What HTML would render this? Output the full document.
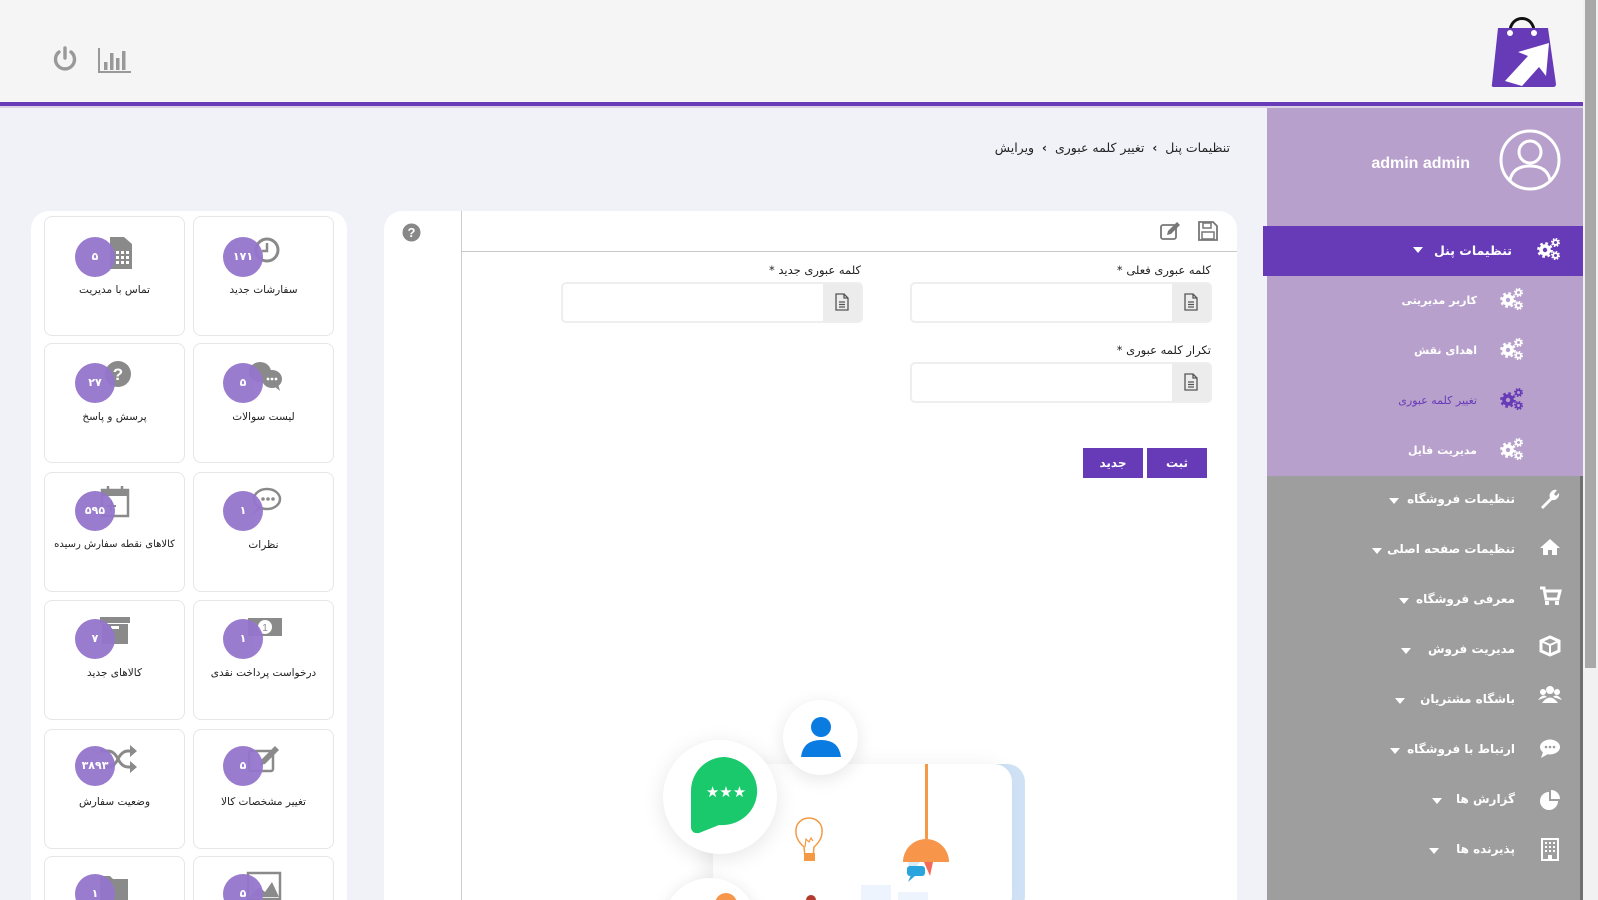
<!DOCTYPE html>
<html style="overflow:hidden;width:1598px;height:900px"><head><meta charset="utf-8">
<style>
*{box-sizing:border-box;margin:0;padding:0}
html,body{overflow:hidden}
body{width:1598px;height:900px;background:#f0f2f7;font-family:"DejaVu Sans","Liberation Sans",sans-serif;position:relative}
#wrap{position:absolute;left:0;top:0;width:1598px;height:900px;overflow:hidden}
.abs{position:absolute}
.fa{font-family:"DejaVu Sans",sans-serif;direction:rtl;white-space:nowrap}
#hdr{left:0;top:0;width:1583px;height:102px;background:#f5f5f5}
#hline{left:0;top:102px;width:1583px;height:4px;background:#673ab7}
#hline2{left:0;top:106px;width:1583px;height:2px;background:#d9d2e6}
#sb{left:1583px;top:0;width:15px;height:900px;background:#f1f1f1}
#thumb{left:1585px;top:0;width:11px;height:668px;background:#a8a8a8}
#side{left:1267px;top:108px;width:316px;height:368px;background:#b8a0cc}
#side2{left:1267px;top:476px;width:316px;height:424px;background:#9e9e9e}
#sideline{left:1580px;top:476px;width:3px;height:424px;background:#6f6f6f}
#act{left:1263px;top:226px;width:320px;height:50px;background:#673ab7}
.t{color:#fff;font-size:12px;font-weight:bold}
.car{width:0;height:0;border-left:5px solid transparent;border-right:5px solid transparent;border-top:6px solid #fff}
.card{background:#fff;border:1px solid #e6e6ea;border-radius:8px;width:141px;height:120px}
.circ{width:40px;height:40px;border-radius:50%;background:#9575cd;color:#fff;font-size:11px;font-weight:bold;text-align:center;line-height:40px;opacity:.95}
.lbl{font-size:10.5px;color:#222;text-align:center;width:141px}
.inp{height:41px;border:2px solid #eeeeee;border-radius:5px;background:#fff}
.ib{right:0;top:0;width:38px;height:37px;background:#ececec}
.btn{background:#673ab7;color:#fff;font-size:12px;font-weight:bold;text-align:center;line-height:30px;height:30px}
</style></head><body><div id="wrap">
<div id="hdr" class="abs"></div>
<div id="hline" class="abs"></div>
<div id="hline2" class="abs"></div>
<svg class="abs" style="left:51px;top:45px" width="28" height="28" viewBox="0 0 28 28"><path d="M8 7 A9.5 9.5 0 1 0 20 7" fill="none" stroke="#999" stroke-width="3.4" stroke-linecap="round"/><line x1="14" y1="3" x2="14" y2="13" stroke="#999" stroke-width="3.4" stroke-linecap="round"/></svg>
<svg class="abs" style="left:98px;top:48px" width="34" height="26" viewBox="0 0 34 26"><path d="M1 0 V24 H33" fill="none" stroke="#999" stroke-width="2"/><rect x="6" y="14" width="3.5" height="8" fill="#999"/><rect x="12" y="5" width="3.5" height="17" fill="#999"/><rect x="18" y="10" width="3.5" height="12" fill="#999"/><rect x="24" y="3" width="3.5" height="19" fill="#999"/></svg>
<svg class="abs" style="left:1488px;top:10px" width="72" height="80" viewBox="0 0 72 80"><path d="M22 22 C22 4 46 4 46 22" fill="none" stroke="#111" stroke-width="3"/><path d="M10 18 H60 L68 74 Q68 77 65 77 H6 Q3 77 4 74 Z" fill="#673ab7"/><circle cx="22" cy="23" r="3" fill="#fff"/><circle cx="46" cy="23" r="3" fill="#fff"/><path d="M17 71 L40 46 L30 42 L61 33 L58 66 L51 57 L34 76 Z" fill="#fff"/></svg>
<div id="sb" class="abs"></div><div id="thumb" class="abs"></div>

<div id="side" class="abs"></div>
<div id="side2" class="abs"></div>
<div id="sideline" class="abs"></div>
<svg class="abs" style="left:1499px;top:129px" width="62" height="62" viewBox="0 0 62 62"><circle cx="31" cy="31" r="29" fill="none" stroke="#fff" stroke-width="3"/><circle cx="31" cy="23" r="11" fill="none" stroke="#fff" stroke-width="3"/><path d="M11 51 Q14 37 31 37 Q48 37 51 51" fill="none" stroke="#fff" stroke-width="3"/></svg>
<div class="abs t" style="right:128px;top:155px;font-size:16px;font-family:'Liberation Sans',sans-serif">admin admin</div>
<div id="act" class="abs"></div>
<svg width="0" height="0" style="position:absolute"><defs><g id="gear"><circle cx="8" cy="13" r="4" fill="none" stroke="currentColor" stroke-width="3.6"/><circle cx="8" cy="13" r="6.6" fill="none" stroke="currentColor" stroke-width="2.6" stroke-dasharray="2.6 2.6"/><circle cx="18.5" cy="5.5" r="2.4" fill="none" stroke="currentColor" stroke-width="1.8"/><circle cx="18.5" cy="5.5" r="3.8" fill="none" stroke="currentColor" stroke-width="1.5" stroke-dasharray="1.6 1.4"/><circle cx="18.5" cy="18.5" r="2.4" fill="none" stroke="currentColor" stroke-width="1.8"/><circle cx="18.5" cy="18.5" r="3.8" fill="none" stroke="currentColor" stroke-width="1.5" stroke-dasharray="1.6 1.4"/></g></defs></svg>
<svg class="abs" style="left:1537px;top:237px;color:#fff" width="24" height="24"><use href="#gear"/></svg>
<div class="abs fa t" style="right:86px;top:243px;font-size:12.5px">تنظیمات پنل</div>
<div class="abs car" style="left:1413px;top:247px"></div>
<svg class="abs" style="left:1500px;top:287px;color:#fff" width="24" height="24"><use href="#gear"/></svg>
<div class="abs fa t" style="right:121px;top:294px;font-size:11px">کاربر مدیریتی</div>
<svg class="abs" style="left:1500px;top:337px;color:#fff" width="24" height="24"><use href="#gear"/></svg>
<div class="abs fa t" style="right:121px;top:344px;font-size:11px">اهدای نقش</div>
<svg class="abs" style="left:1500px;top:387px;color:#673ab7" width="24" height="24"><use href="#gear"/></svg>
<div class="abs fa t" style="right:121px;top:394px;font-size:11px;color:#673ab7;font-weight:normal">تغییر کلمه عبوری</div>
<svg class="abs" style="left:1500px;top:437px;color:#fff" width="24" height="24"><use href="#gear"/></svg>
<div class="abs fa t" style="right:121px;top:444px;font-size:11px">مدیریت فایل</div>

<div class="abs fa t" style="right:83px;top:492px">تنظیمات فروشگاه</div><div class="abs car" style="left:1389px;top:498px"></div>
<div class="abs fa t" style="right:83px;top:542px">تنظیمات صفحه اصلی</div><div class="abs car" style="left:1372px;top:548px"></div>
<div class="abs fa t" style="right:83px;top:592px">معرفی فروشگاه</div><div class="abs car" style="left:1399px;top:598px"></div>
<div class="abs fa t" style="right:83px;top:642px">مدیریت فروش</div><div class="abs car" style="left:1401px;top:648px"></div>
<div class="abs fa t" style="right:83px;top:692px">باشگاه مشتریان</div><div class="abs car" style="left:1395px;top:698px"></div>
<div class="abs fa t" style="right:83px;top:742px">ارتباط با فروشگاه</div><div class="abs car" style="left:1390px;top:748px"></div>
<div class="abs fa t" style="right:83px;top:792px">گزارش ها</div><div class="abs car" style="left:1432px;top:798px"></div>
<div class="abs fa t" style="right:83px;top:842px">پذیرنده ها</div><div class="abs car" style="left:1429px;top:848px"></div>
<svg class="abs" style="left:1538px;top:487px" width="24" height="380" viewBox="0 0 24 380" fill="#fff">
<path d="M3 20 L12 11 A6 6 0 0 1 19 3 L16 7 L18 9 L21 6 A6 6 0 0 1 14 13 L5 22 Z"/>
<path d="M2 61 L12 52 L22 61 H19 V68 H14 V63 H10 V68 H5 V61 Z"/>
<path d="M2 101 H6 L8 112 H20 L22 104 H7" fill="none" stroke="#fff" stroke-width="3"/><rect x="7" y="114" width="4" height="4"/><rect x="17" y="114" width="4" height="4"/>
<path d="M12 150 L21 154 V164 L12 168 L3 164 V154 Z" fill="none" stroke="#fff" stroke-width="3"/><path d="M3 154 L12 158 L21 154 M12 158 V168" fill="none" stroke="#fff" stroke-width="2"/>
<circle cx="12" cy="203" r="4"/><circle cx="5" cy="205" r="3"/><circle cx="19" cy="205" r="3"/><path d="M4 216 Q12 205 20 216 Z"/><path d="M0 213 Q5 206 9 210 Z M24 213 Q19 206 15 210 Z"/>
<ellipse cx="12" cy="260" rx="10" ry="7.5"/><path d="M5 265 L3 271 L10 267 Z"/><circle cx="8" cy="260" r="1.3" fill="#9e9e9e"/><circle cx="12" cy="260" r="1.3" fill="#9e9e9e"/><circle cx="16" cy="260" r="1.3" fill="#9e9e9e"/>
<path d="M11 305 A9 9 0 1 0 20 314 H11 Z"/><path d="M13 303 A9 9 0 0 1 22 312 H13 Z"/>
<g transform="translate(0,17)"><rect x="4" y="335" width="16" height="21" fill="none" stroke="#fff" stroke-width="2"/><path d="M7 338h2v2h-2zM11 338h2v2h-2zM15 338h2v2h-2zM7 342h2v2h-2zM11 342h2v2h-2zM15 342h2v2h-2zM7 346h2v2h-2zM11 346h2v2h-2zM15 346h2v2h-2zM10 351h4v5h-4z"/></g>
</svg>

<div class="abs fa" style="right:368px;top:140px;font-size:12.5px;color:#222">تنظیمات پنل &nbsp;<b style="font-size:12px">›</b>&nbsp; تغییر کلمه عبوری &nbsp;<b style="font-size:12px">›</b>&nbsp; ویرایش</div>

<div class="abs" style="left:384px;top:211px;width:853px;height:700px;background:#fff;border-radius:18px 18px 0 0"></div>
<div class="abs" style="left:461px;top:211px;width:1px;height:689px;background:#ccc"></div>
<div class="abs" style="left:461px;top:251px;width:776px;height:1px;background:#c8c8c8"></div>
<svg class="abs" style="left:402px;top:223px" width="19" height="19" viewBox="0 0 19 19"><circle cx="9.5" cy="9.5" r="9" fill="#888"/><text x="9.5" y="14" font-size="13" font-weight="bold" fill="#fff" text-anchor="middle" font-family="Liberation Sans">?</text></svg>
<svg class="abs" style="left:1160px;top:221px" width="22" height="20" viewBox="0 0 22 20"><rect x="1" y="4" width="15" height="14" rx="2" fill="none" stroke="#777" stroke-width="1.8"/><path d="M7 14 L8 10 L17 1 L20 4 L11 13 Z" fill="#777"/></svg>
<svg class="abs" style="left:1198px;top:221px" width="20" height="20" viewBox="0 0 20 20"><path d="M1 1 H15 L19 5 V19 H1 Z" fill="none" stroke="#777" stroke-width="1.8"/><rect x="5" y="2" width="8" height="5" fill="none" stroke="#777" stroke-width="1.5"/><rect x="4" y="11" width="12" height="7" fill="none" stroke="#777" stroke-width="1.5"/></svg>

<div class="abs fa" style="right:387px;top:263px;font-size:11.5px;color:#222">کلمه عبوری فعلی *</div>
<div class="abs fa" style="right:737px;top:263px;font-size:11.5px;color:#222">کلمه عبوری جدید *</div>
<div class="abs fa" style="right:387px;top:343px;font-size:11.5px;color:#222">تکرار کلمه عبوری *</div>
<svg width="0" height="0" style="position:absolute"><defs><g id="doc"><path d="M2 1 H10 L14 5 V17 H2 Z M10 1 V5 H14" fill="none" stroke="#555" stroke-width="1.3"/><path d="M5 9 H11 M5 11.5 H11 M5 14 H11" stroke="#555" stroke-width="1.2"/></g></defs></svg>
<div class="abs inp" style="left:910px;top:282px;width:302px"><div class="abs ib"><svg class="abs" style="left:11px;top:9px" width="16" height="18"><use href="#doc"/></svg></div></div>
<div class="abs inp" style="left:561px;top:282px;width:302px"><div class="abs ib"><svg class="abs" style="left:11px;top:9px" width="16" height="18"><use href="#doc"/></svg></div></div>
<div class="abs inp" style="left:910px;top:362px;width:302px"><div class="abs ib"><svg class="abs" style="left:11px;top:9px" width="16" height="18"><use href="#doc"/></svg></div></div>
<div class="abs btn fa" style="left:1147px;top:448px;width:60px">ثبت</div>
<div class="abs btn fa" style="left:1083px;top:448px;width:60px">جدید</div>

<div class="abs" style="left:720px;top:764px;width:305px;height:150px;background:#cfe1f4;border-radius:18px"></div>
<div class="abs" style="left:713px;top:764px;width:299px;height:150px;background:#fff;border-radius:18px;box-shadow:-8px 0 20px rgba(0,0,0,.06)"></div>
<div class="abs" style="left:663px;top:740px;width:114px;height:114px;border-radius:50%;background:#fff;box-shadow:0 4px 22px rgba(0,0,0,.1)"></div>
<svg class="abs" style="left:689px;top:756px" width="72" height="78" viewBox="0 0 72 78"><path d="M36 1 A35 34 0 1 1 30 69 L10 77 Q3 78 2 72 V36 A34 34 0 0 1 36 1 Z" fill="#19c96b"/><text x="37" y="41" font-size="15" fill="#fff" text-anchor="middle" font-family="DejaVu Sans">★★★</text></svg>
<div class="abs" style="left:783px;top:700px;width:75px;height:75px;border-radius:50%;background:#fff;box-shadow:0 4px 18px rgba(0,0,0,.1)"></div>
<svg class="abs" style="left:800px;top:716px" width="42" height="42" viewBox="0 0 42 42"><circle cx="21" cy="11" r="10" fill="#0a7be0"/><path d="M1 41 Q3 24 21 24 Q39 24 41 41 Z" fill="#0a7be0"/></svg>
<div class="abs" style="left:663px;top:878px;width:94px;height:94px;border-radius:50%;background:#fff;box-shadow:0 2px 16px rgba(0,0,0,.1)"></div>
<div class="abs" style="left:715px;top:893px;width:22px;height:22px;border-radius:50%;background:#f7964a"></div>
<svg class="abs" style="left:792px;top:817px" width="36" height="50" viewBox="0 0 36 50"><path d="M12 30 Q3 22 4 13 A13 12 0 0 1 30 13 Q31 22 22 30 L21 40 H13 Z" fill="none" stroke="#f49a45" stroke-width="1.5"/><rect x="12" y="36" width="11" height="8" fill="#f49a45"/><path d="M13 30 L14 22 L17 25 L19 21 L21 24" fill="none" stroke="#f49a45" stroke-width="1.2"/></svg>
<div class="abs" style="left:925px;top:764px;width:3px;height:75px;background:#f49a45"></div>
<svg class="abs" style="left:900px;top:834px" width="52" height="52" viewBox="0 0 52 52"><path d="M3 28 A23 23 0 0 1 49 28 Z" fill="#f7964a"/><path d="M24 28 L33 28 L30 42 Z" fill="#f26b5b"/><path d="M8 28 L20 28 L10 40 Z" fill="#d8ecf8"/><rect x="7" y="32" width="18" height="10" rx="3" fill="#29a4dc"/><path d="M11 41 L8 48 L16 41 Z" fill="#29a4dc"/></svg>
<div class="abs" style="left:861px;top:885px;width:30px;height:20px;background:#eef4fd"></div>
<div class="abs" style="left:898px;top:892px;width:30px;height:20px;background:#eef4fd"></div>
<div class="abs" style="left:806px;top:895px;width:10px;height:10px;border-radius:50%;background:#b23a2c"></div>

<div class="abs" style="left:31px;top:211px;width:316px;height:700px;background:#fff;border-radius:18px 18px 0 0"></div>
<div class="abs card" style="left:193px;top:216px"></div><div class="abs card" style="left:44px;top:216px"></div>
<div class="abs card" style="left:193px;top:343px"></div><div class="abs card" style="left:44px;top:343px"></div>
<div class="abs card" style="left:193px;top:472px"></div><div class="abs card" style="left:44px;top:472px"></div>
<div class="abs card" style="left:193px;top:600px"></div><div class="abs card" style="left:44px;top:600px"></div>
<div class="abs card" style="left:193px;top:729px"></div><div class="abs card" style="left:44px;top:729px"></div>
<div class="abs card" style="left:193px;top:856px"></div><div class="abs card" style="left:44px;top:856px"></div>

<svg class="abs" style="left:96px;top:235px" width="44" height="44" viewBox="0 0 44 44" fill="#8a8a8a">
<path d="M14 2 H28 L36 9 V34 H14 Z"/><g fill="#fff"><rect x="20" y="16" width="3" height="3"/><rect x="25" y="16" width="3" height="3"/><rect x="30" y="16" width="3" height="3"/><rect x="20" y="21" width="3" height="3"/><rect x="25" y="21" width="3" height="3"/><rect x="30" y="21" width="3" height="3"/><rect x="20" y="26" width="3" height="3"/><rect x="25" y="26" width="3" height="3"/><rect x="30" y="26" width="3" height="3"/></g></svg>
<svg class="abs" style="left:246px;top:235px" width="44" height="44" viewBox="0 0 44 44"><circle cx="21" cy="15" r="11" fill="none" stroke="#8a8a8a" stroke-width="3"/><path d="M21 8 V16 H16" fill="none" stroke="#8a8a8a" stroke-width="2.5"/></svg>
<svg class="abs" style="left:96px;top:360px" width="44" height="44" viewBox="0 0 44 44"><circle cx="22" cy="14" r="13" fill="#8a8a8a"/><text x="22" y="20" font-size="17" font-weight="bold" fill="#fff" text-anchor="middle" font-family="Liberation Sans">?</text></svg>
<svg class="abs" style="left:246px;top:360px" width="44" height="44" viewBox="0 0 44 44" fill="#8a8a8a"><ellipse cx="14" cy="12" rx="11" ry="10"/><ellipse cx="26" cy="19" rx="10" ry="9"/><path d="M28 26 L34 31 L32 24 Z"/><circle cx="22" cy="19" r="1.4" fill="#fff"/><circle cx="26" cy="19" r="1.4" fill="#fff"/><circle cx="30" cy="19" r="1.4" fill="#fff"/></svg>
<svg class="abs" style="left:96px;top:484px" width="44" height="44" viewBox="0 0 44 44"><rect x="6" y="6" width="26" height="26" fill="none" stroke="#8a8a8a" stroke-width="2.5"/><rect x="6" y="6" width="26" height="6" fill="#8a8a8a"/><path d="M12 2 V9 M26 2 V9" stroke="#8a8a8a" stroke-width="2.5"/><path d="M10 22 H20 M15 17 V27" stroke="#8a8a8a" stroke-width="2"/></svg>
<svg class="abs" style="left:246px;top:484px" width="44" height="44" viewBox="0 0 44 44"><ellipse cx="21" cy="15" rx="13" ry="10" fill="none" stroke="#8a8a8a" stroke-width="2.5"/><path d="M12 22 L7 30 L17 24" fill="#8a8a8a"/><circle cx="17" cy="15" r="1.8" fill="#8a8a8a"/><circle cx="22" cy="15" r="1.8" fill="#8a8a8a"/><circle cx="27" cy="15" r="1.8" fill="#8a8a8a"/></svg>
<svg class="abs" style="left:96px;top:615px" width="44" height="44" viewBox="0 0 44 44" fill="#8a8a8a"><rect x="4" y="2" width="30" height="6"/><rect x="6" y="9" width="26" height="20"/><rect x="15" y="11" width="8" height="3" fill="#fff"/></svg>
<svg class="abs" style="left:246px;top:615px" width="44" height="44" viewBox="0 0 44 44"><rect x="2" y="3" width="34" height="18" fill="#8a8a8a"/><circle cx="19" cy="12" r="7" fill="#fff"/><text x="19" y="16" font-size="10" fill="#8a8a8a" text-anchor="middle" font-family="Liberation Sans">1</text></svg>
<svg class="abs" style="left:96px;top:743px" width="44" height="44" viewBox="0 0 44 44"><path d="M4 8 H12 Q18 8 22 16 Q26 24 32 24 H36" fill="none" stroke="#8a8a8a" stroke-width="3"/><path d="M4 24 H12 Q18 24 22 16 Q26 8 32 8 H36" fill="none" stroke="#8a8a8a" stroke-width="3"/><path d="M34 2 L41 8 L34 14 Z M34 18 L41 24 L34 30 Z" fill="#8a8a8a"/></svg>
<svg class="abs" style="left:246px;top:743px" width="44" height="44" viewBox="0 0 44 44"><rect x="3" y="8" width="24" height="20" rx="2" fill="none" stroke="#8a8a8a" stroke-width="2.5"/><path d="M14 22 L15 17 L29 3 L33 7 L19 21 Z" fill="#8a8a8a"/></svg>
<svg class="abs" style="left:96px;top:870px" width="44" height="44" viewBox="0 0 44 44" fill="#8a8a8a"><path d="M4 6 H14 L17 9 H32 V30 H4 Z"/></svg>
<svg class="abs" style="left:246px;top:870px" width="44" height="44" viewBox="0 0 44 44"><rect x="2" y="3" width="32" height="26" fill="none" stroke="#8a8a8a" stroke-width="2.5"/><path d="M4 27 L13 17 L19 22 L26 12 L33 27 Z" fill="#8a8a8a"/></svg>

<div class="abs circ fa" style="left:75px;top:237px">۵</div>
<div class="abs circ fa" style="left:223px;top:237px">۱۷۱</div>
<div class="abs circ fa" style="left:75px;top:363px">۲۷</div>
<div class="abs circ fa" style="left:223px;top:363px">۵</div>
<div class="abs circ fa" style="left:75px;top:491px">۵۹۵</div>
<div class="abs circ fa" style="left:223px;top:491px">۱</div>
<div class="abs circ fa" style="left:75px;top:619px">۷</div>
<div class="abs circ fa" style="left:223px;top:619px">۱</div>
<div class="abs circ fa" style="left:75px;top:746px">۳۸۹۳</div>
<div class="abs circ fa" style="left:223px;top:746px">۵</div>
<div class="abs circ fa" style="left:75px;top:874px">۱</div>
<div class="abs circ fa" style="left:223px;top:874px">۵</div>

<div class="abs lbl fa" style="left:44px;top:284px">تماس با مدیریت</div>
<div class="abs lbl fa" style="left:193px;top:284px">سفارشات جدید</div>
<div class="abs lbl fa" style="left:44px;top:411px">پرسش و پاسخ</div>
<div class="abs lbl fa" style="left:193px;top:411px">لیست سوالات</div>
<div class="abs lbl fa" style="left:44px;top:539px;font-size:10px">کالاهای نقطه سفارش رسیده</div>
<div class="abs lbl fa" style="left:193px;top:539px">نظرات</div>
<div class="abs lbl fa" style="left:44px;top:667px">کالاهای جدید</div>
<div class="abs lbl fa" style="left:193px;top:667px">درخواست پرداخت نقدی</div>
<div class="abs lbl fa" style="left:44px;top:796px">وضعیت سفارش</div>
<div class="abs lbl fa" style="left:193px;top:796px">تغییر مشخصات کالا</div>
</div></body></html>
